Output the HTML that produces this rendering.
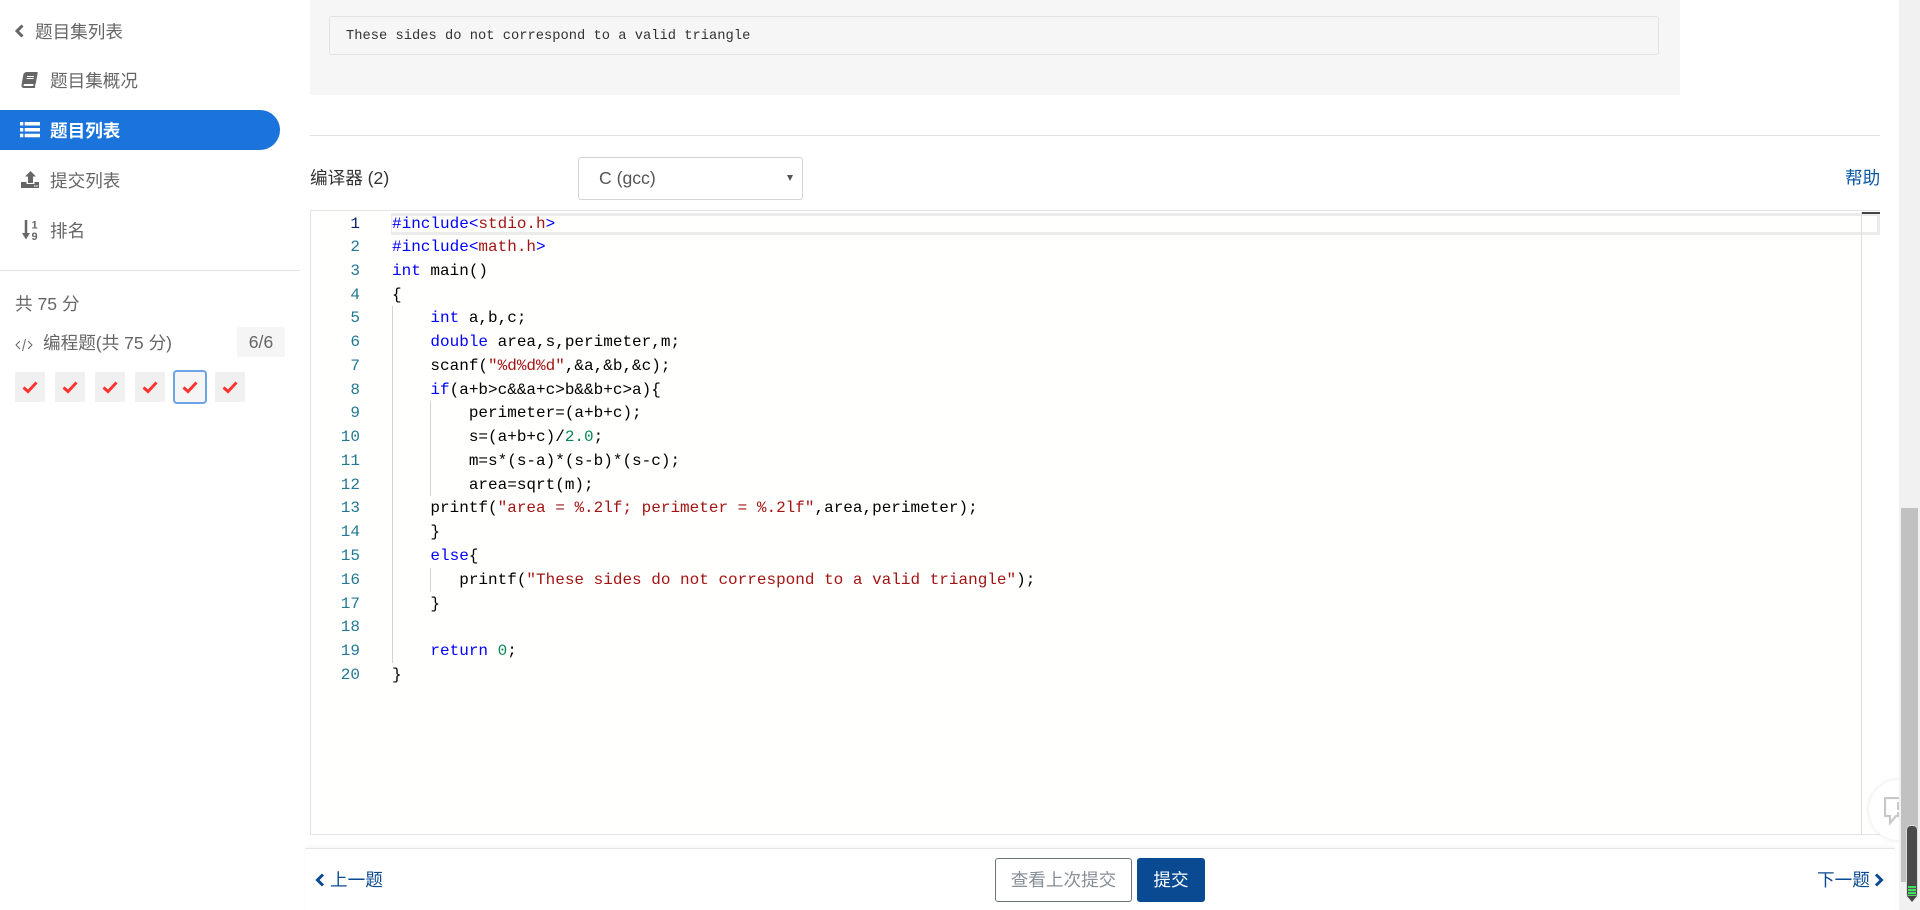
<!DOCTYPE html>
<html lang="zh">
<head>
<meta charset="utf-8">
<title>编辑器</title>
<style>
*{box-sizing:border-box}
html,body{margin:0;padding:0;width:1920px;height:910px;overflow:hidden;background:#fff}
body{font-family:"Liberation Sans","Noto Sans CJK SC",sans-serif;font-size:17.600px;color:#666;position:relative}
.a{position:absolute}
.t{position:absolute;white-space:nowrap;line-height:24px}
.box{position:absolute;top:372px;width:30px;height:30px;background:#f0f0f0;border-radius:2px}
.box svg{position:absolute;left:7px;top:8px}
.code{position:absolute;left:392px;font:16px/24px "Liberation Mono",monospace;color:#000;white-space:pre;height:24px}
.ln{position:absolute;left:320px;width:40px;text-align:right;font:16px/24px "Liberation Mono",monospace;color:#237893}
.k{color:#00f}.s{color:#a31515}.n{color:#098658}
</style>
</head>
<body>
<!-- sidebar -->
<svg class="a" style="left:14px;top:24px" width="11" height="14" viewBox="0 0 11 14"><path d="M8.500 1.500 3 7l5.500 5.500" fill="none" stroke="#666" stroke-width="3"/></svg>
<div class="t" style="left:35px;top:20px">题目集列表</div>

<svg class="a" style="left:21px;top:72px" width="18" height="16" viewBox="0 0 576 512"><g transform="translate(90,0) skewX(-10)"><path d="M448 360V24c0-13.300-10.700-24-24-24H96C43 0 0 43 0 96v320c0 53 43 96 96 96h328c13.300 0 24-10.700 24-24v-16c0-7.500-3.500-14.300-8.900-18.700-4.200-15.400-4.200-59.300 0-74.700 5.400-4.300 8.900-11.100 8.900-18.600zM128 134c0-3.300 2.700-6 6-6h212c3.300 0 6 2.700 6 6v20c0 3.300-2.700 6-6 6H134c-3.300 0-6-2.700-6-6v-20zm0 64c0-3.300 2.700-6 6-6h212c3.300 0 6 2.700 6 6v20c0 3.300-2.700 6-6 6H134c-3.300 0-6-2.700-6-6v-20zm253.400 250H96c-17.700 0-32-14.300-32-32 0-17.600 14.400-32 32-32h285.400c-1.900 17.100-1.900 46.900 0 64z" fill="#666"/></g></svg>
<div class="t" style="left:50px;top:69px">题目集概况</div>

<div class="a" style="left:0;top:110px;width:280px;height:40px;background:#1b74dc;border-radius:0 20px 20px 0"></div>
<svg class="a" style="left:20px;top:121px" width="20" height="17" viewBox="0 0 20 17"><path d="M0 1h3.300v3.500H0zM0 7h3.300v3.500H0zM0 12.800h3.300v3.500H0zM4.700 1H20v3.500H4.700zM4.700 7H20v3.500H4.700zM4.700 12.800H20v3.500H4.700z" fill="#fff"/></svg>
<div class="t" style="left:50px;top:119px;color:#fff;font-weight:700">题目列表</div>

<svg class="a" style="left:21px;top:171px" width="18" height="17" viewBox="0 0 18 17"><path d="M9.500 0 15 5.500h-3V12H7V5.500H4z" fill="#666"/><path d="M0 11h5.500v2h8v-2H18v6H0z" fill="#666"/><path d="M13 15h1.500M15.200 15h1.500" stroke="#fff" stroke-width="1.200"/></svg>
<div class="t" style="left:50px;top:169px">提交列表</div>

<svg class="a" style="left:22px;top:220px" width="17" height="21" viewBox="0 0 17 21"><path d="M4 0v15" stroke="#666" stroke-width="2.500"/><path d="M0 13h8l-4 6.500z" fill="#666"/><text x="9.500" y="8.500" font-size="11" font-weight="700" font-family="Liberation Sans" fill="#666">1</text><text x="9.500" y="20" font-size="11" font-weight="700" font-family="Liberation Sans" fill="#666">9</text></svg>
<div class="t" style="left:50px;top:219px">排名</div>

<div class="a" style="left:0;top:270px;width:300px;height:1px;background:#e2e2e2"></div>
<div class="t" style="left:15px;top:292px">共 75 分</div>
<svg class="a" style="left:15px;top:338px" width="18" height="14" viewBox="0 0 18 14"><path d="M5 3 1 7l4 4M13 3l4 4-4 4M10.500 1 7.500 13" fill="none" stroke="#666" stroke-width="1"/></svg>
<div class="t" style="left:43px;top:331px">编程题(共 75 分)</div>
<div class="a" style="left:237px;top:327px;width:48px;height:30px;background:#f5f5f5;border-radius:2px;text-align:center;line-height:31px">6/6</div>

<div class="box" style="left:15px"><svg width="16" height="14" viewBox="0 0 16 14"><path d="M1.500 7.500 6 11.500 14.500 2.500" fill="none" stroke="#f33" stroke-width="3"/></svg></div>
<div class="box" style="left:55px"><svg width="16" height="14" viewBox="0 0 16 14"><path d="M1.500 7.500 6 11.500 14.500 2.500" fill="none" stroke="#f33" stroke-width="3"/></svg></div>
<div class="box" style="left:95px"><svg width="16" height="14" viewBox="0 0 16 14"><path d="M1.500 7.500 6 11.500 14.500 2.500" fill="none" stroke="#f33" stroke-width="3"/></svg></div>
<div class="box" style="left:135px"><svg width="16" height="14" viewBox="0 0 16 14"><path d="M1.500 7.500 6 11.500 14.500 2.500" fill="none" stroke="#f33" stroke-width="3"/></svg></div>
<div class="box" style="left:173px;top:370px;width:34px;height:34px;background:#f5f5f5;border:2px solid #6ea4e6;border-radius:4px"><svg style="left:7px;top:8px" width="16" height="14" viewBox="0 0 16 14"><path d="M1.500 7.500 6 11.500 14.500 2.500" fill="none" stroke="#f33" stroke-width="3"/></svg></div>
<div class="box" style="left:215px"><svg width="16" height="14" viewBox="0 0 16 14"><path d="M1.500 7.500 6 11.500 14.500 2.500" fill="none" stroke="#f33" stroke-width="3"/></svg></div>

<!-- sample output -->
<div class="a" style="left:310px;top:0;width:1370px;height:95px;background:#f6f6f6"></div>
<div class="a" style="left:329px;top:16px;width:1330px;height:39px;background:#f6f6f6;border:1px solid #e2e2e2;border-radius:3px"></div>
<div class="a" style="left:346px;top:26px;font:13.750px/22px 'Liberation Mono',monospace;color:#333;white-space:pre">These sides do not correspond to a valid triangle</div>
<div class="a" style="left:310px;top:135px;width:1570px;height:1px;background:#e2e2e2"></div>

<!-- editor header -->
<div class="t" style="left:310px;top:166px;color:#333">编译器 (2)</div>
<div class="a" style="left:578px;top:157px;width:225px;height:43px;border:1px solid #d4d4d4;border-radius:3px"></div>
<div class="t" style="left:599px;top:166px;color:#555">C (gcc)</div>
<svg class="a" style="left:786px;top:174px" width="8" height="8" viewBox="0 0 8 8"><path d="M1 1h6L4 7z" fill="#555"/></svg>
<div class="t" style="left:1845px;top:166px;color:#0a58a8">帮助</div>

<!-- editor -->
<div class="a" style="left:310px;top:210px;width:1570px;height:625px;border:1px solid #e4e4e4;border-right:0;background:#fffffe"></div>
<div class="a" style="left:391px;top:213px;width:1489px;height:22px;border:3px solid #ebebeb;border-left-width:1px;background:#fffffe"></div>
<div class="a" style="left:1861px;top:212px;width:1px;height:622px;background:#ddd"></div>
<div class="a" style="left:1862px;top:212px;width:18px;height:2px;background:#444"></div>
<div class="a" style="left:392px;top:306px;width:1px;height:357px;background:#d3d3d3"></div>
<div class="a" style="left:430px;top:401px;width:1px;height:95px;background:#d3d3d3"></div>
<div class="a" style="left:430px;top:568px;width:1px;height:24px;background:#d3d3d3"></div>

<div class="ln" style="top:211.500px;color:#0b216f">1</div><div class="code" style="top:211.500px"><span class="k">#include&lt;</span><span class="s">stdio.h</span><span class="k">&gt;</span></div>
<div class="ln" style="top:235px">2</div><div class="code" style="top:235px"><span class="k">#include&lt;</span><span class="s">math.h</span><span class="k">&gt;</span></div>
<div class="ln" style="top:259px">3</div><div class="code" style="top:259px"><span class="k">int</span> main()</div>
<div class="ln" style="top:283px">4</div><div class="code" style="top:283px">{</div>
<div class="ln" style="top:306px">5</div><div class="code" style="top:306px">    <span class="k">int</span> a,b,c;</div>
<div class="ln" style="top:330px">6</div><div class="code" style="top:330px">    <span class="k">double</span> area,s,perimeter,m;</div>
<div class="ln" style="top:354px">7</div><div class="code" style="top:354px">    scanf(<span class="s">"%d%d%d"</span>,&amp;a,&amp;b,&amp;c);</div>
<div class="ln" style="top:378px">8</div><div class="code" style="top:378px">    <span class="k">if</span>(a+b&gt;c&amp;&amp;a+c&gt;b&amp;&amp;b+c&gt;a){</div>
<div class="ln" style="top:401px">9</div><div class="code" style="top:401px">        perimeter=(a+b+c);</div>
<div class="ln" style="top:425px">10</div><div class="code" style="top:425px">        s=(a+b+c)/<span class="n">2.0</span>;</div>
<div class="ln" style="top:449px">11</div><div class="code" style="top:449px">        m=s*(s-a)*(s-b)*(s-c);</div>
<div class="ln" style="top:473px">12</div><div class="code" style="top:473px">        area=sqrt(m);</div>
<div class="ln" style="top:496px">13</div><div class="code" style="top:496px">    printf(<span class="s">"area = %.2lf; perimeter = %.2lf"</span>,area,perimeter);</div>
<div class="ln" style="top:520px">14</div><div class="code" style="top:520px">    }</div>
<div class="ln" style="top:544px">15</div><div class="code" style="top:544px">    <span class="k">else</span>{</div>
<div class="ln" style="top:568px">16</div><div class="code" style="top:568px">       printf(<span class="s">"These sides do not correspond to a valid triangle"</span>);</div>
<div class="ln" style="top:592px">17</div><div class="code" style="top:592px">    }</div>
<div class="ln" style="top:615px">18</div>
<div class="ln" style="top:639px">19</div><div class="code" style="top:639px">    <span class="k">return</span> <span class="n">0</span>;</div>
<div class="ln" style="top:663px">20</div><div class="code" style="top:663px">}</div>

<!-- bottom bar -->
<div class="a" style="left:305px;top:848px;width:1590px;height:62px;background:#fff;border-top:1px solid #e6e6e6;box-shadow:0 -2px 3px rgba(0,0,0,.04)"></div>
<svg class="a" style="left:315px;top:873px" width="10" height="14" viewBox="0 0 10 14"><path d="M8 1.500 2.500 7 8 12.500" fill="none" stroke="#0a4a92" stroke-width="3"/></svg>
<div class="t" style="left:330px;top:868px;color:#0a4a92">上一题</div>
<div class="a" style="left:995px;top:858px;width:137px;height:44px;border:1px solid #6c757d;border-radius:3px;text-align:center;line-height:43px;color:#868e96">查看上次提交</div>
<div class="a" style="left:1137px;top:858px;width:68px;height:44px;background:#0a4a92;border-radius:3px;text-align:center;line-height:45px;color:#fff">提交</div>
<div class="t" style="left:1817px;top:868px;color:#0a4a92">下一题</div>
<svg class="a" style="left:1874px;top:873px" width="10" height="14" viewBox="0 0 10 14"><path d="M2 1.500 7.500 7 2 12.500" fill="none" stroke="#0a4a92" stroke-width="3"/></svg>

<!-- feedback -->
<div class="a" style="left:1869px;top:780px;width:60px;height:60px;border-radius:50%;background:#fff;box-shadow:0 0 6px rgba(0,0,0,.1)"></div>
<svg class="a" style="left:1884px;top:797px" width="16" height="28" viewBox="0 0 16 28"><path d="M16 1H1v18h5v7l6-7h4" fill="none" stroke="#c8c8c8" stroke-width="2.200"/><path d="M13 5h3v8h-3zM13 15h3v3h-3z" fill="#c8c8c8"/></svg>

<!-- page scrollbar -->
<div class="a" style="left:1899px;top:0;width:21px;height:910px;background:#f1f1f1"></div>
<div class="a" style="left:1901px;top:508px;width:17px;height:374px;background:#c1c1c1"></div>
<div class="a" style="left:1907px;top:826px;width:10px;height:72px;background:#4a4a4a;border-radius:4px;box-shadow:0 0 0 1px #ddd"></div>
<div class="a" style="left:1908px;top:886px;width:8px;height:10px;background:repeating-linear-gradient(#3fe05a 0 2px,#555 2px 3px)"></div>
<svg class="a" style="left:1906px;top:896px" width="12" height="6" viewBox="0 0 12 6"><path d="M1 0h10L6 6z" fill="#444"/></svg>
</body>
</html>
